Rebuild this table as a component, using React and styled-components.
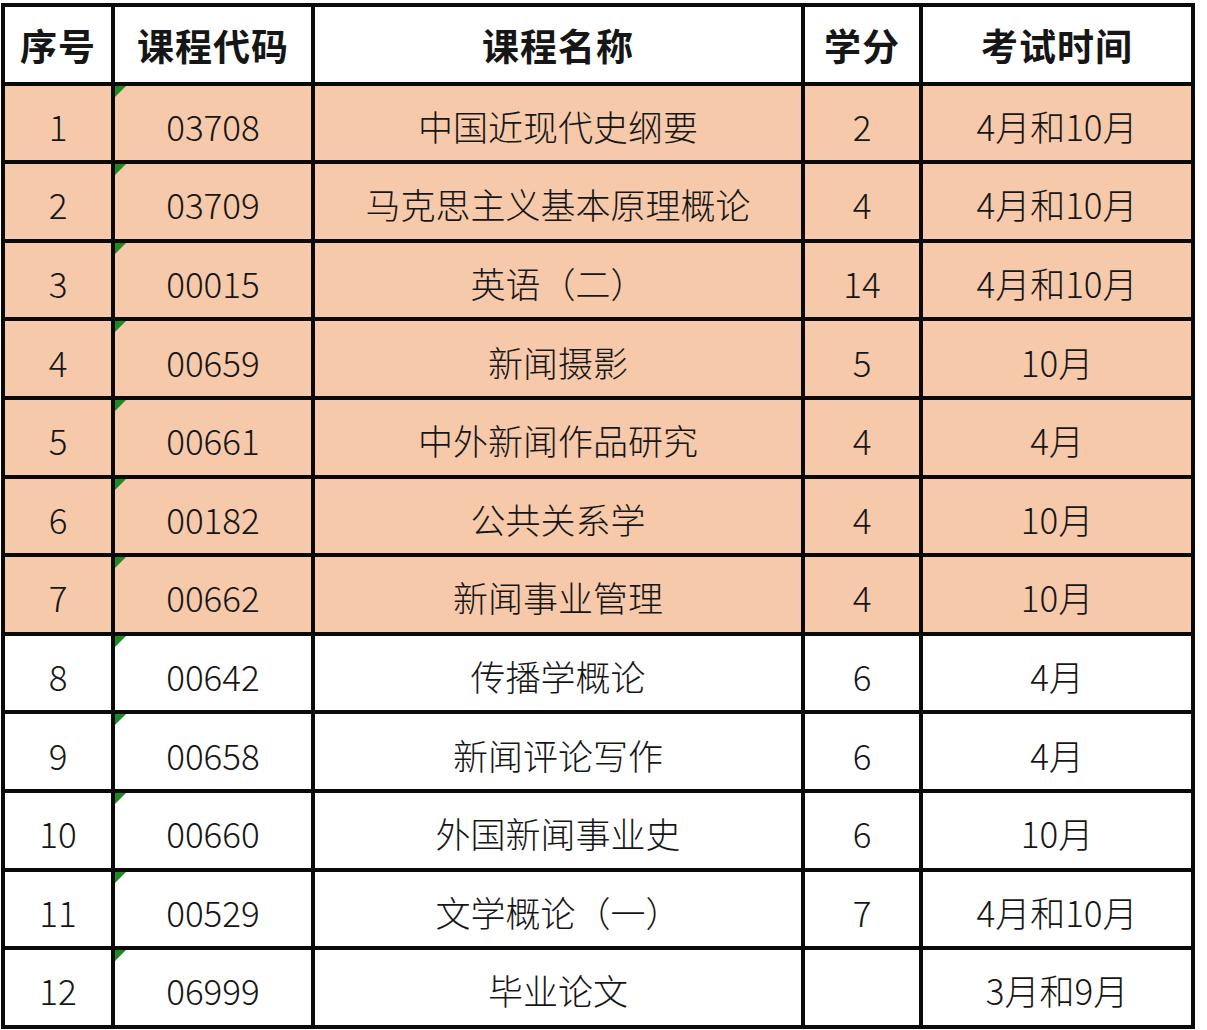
import React from 'react'
import styled, { createGlobalStyle } from 'styled-components'

const GlobalStyle = createGlobalStyle`
  html, body {
    margin: 0;
    padding: 0;
    background: #ffffff;
  }
  body {
    font-family: "Noto Sans CJK SC", "Noto Sans", sans-serif;
  }
`

// grid lines are the black showing through the gaps
const Sheet = styled.div`
  display: grid;
  grid-template-columns: 106px 196px 486px 114px 268px;
  grid-auto-rows: 74.6px;
  gap: 4px;
  padding: 4px;
  margin: 3px 0 0 1px;
  width: max-content;
  background: #0a0a0a;
`

const Cell = styled.div`
  position: relative;
  display: flex;
  align-items: center;
  justify-content: center;
  padding-top: ${p => (p.$head ? '2px' : '5px')};
  box-sizing: border-box;
  background: ${p => (p.$fill ? '#f5c9aa' : '#ffffff')};
  color: #161616;
  font-size: ${p => (p.$head ? '37px' : '35px')};
  font-weight: ${p => (p.$head ? 700 : 300)};
  letter-spacing: ${p => (p.$head ? '1px' : '0')};
  white-space: nowrap;

  ${p => p.$flag && `
    &::before {
      content: '';
      position: absolute;
      left: 0;
      top: 0;
      width: 0;
      height: 0;
      border-top: 11px solid #1f8a24;
      border-right: 11px solid transparent;
    }
  `}
`

const heads = ['序号', '课程代码', '课程名称', '学分', '考试时间']

const rows = [
  ['1', '03708', '中国近现代史纲要', '2', '4月和10月'],
  ['2', '03709', '马克思主义基本原理概论', '4', '4月和10月'],
  ['3', '00015', '英语（二）', '14', '4月和10月'],
  ['4', '00659', '新闻摄影', '5', '10月'],
  ['5', '00661', '中外新闻作品研究', '4', '4月'],
  ['6', '00182', '公共关系学', '4', '10月'],
  ['7', '00662', '新闻事业管理', '4', '10月'],
  ['8', '00642', '传播学概论', '6', '4月'],
  ['9', '00658', '新闻评论写作', '6', '4月'],
  ['10', '00660', '外国新闻事业史', '6', '10月'],
  ['11', '00529', '文学概论（一）', '7', '4月和10月'],
  ['12', '06999', '毕业论文', '', '3月和9月'],
]

export default function App() {
  return (
    <>
      <GlobalStyle />
      <Sheet>
        {heads.map(h => (
          <Cell key={h} $head>{h}</Cell>
        ))}
        {rows.map((r, i) =>
          r.map((v, j) => (
            <Cell key={i + '-' + j} $fill={i < 7} $flag={j === 1}>
              {v}
            </Cell>
          ))
        )}
      </Sheet>
    </>
  )
}
